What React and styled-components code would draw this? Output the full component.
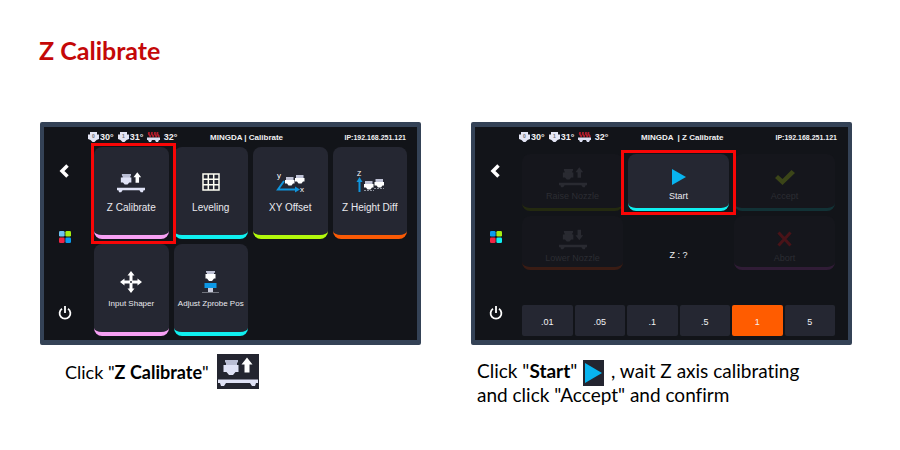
import React from "react";
import styled, { createGlobalStyle, css } from "styled-components";

const GlobalStyle = createGlobalStyle`
  * { box-sizing: border-box; }
  body { margin: 0; background: #fff; color: #000; font-family: Lato, "Open Sans", sans-serif; font-variant-ligatures: none; }
`;

const Page = styled.main`
  padding: 35px 48px 32px 39px;
`;

const Heading = styled.h1`
  margin: 0 0 57px;
  font-size: 25px;
  line-height: 30px;
  font-weight: 700;
  color: #c40808;
`;

const Steps = styled.div`
  display: grid;
  grid-template-columns: 1fr 1fr;
  gap: 50px;
  align-items: start;
  padding-left: 1px;
`;

const Step = styled.section`
  min-width: 0;
`;

const Panel = styled.div`
  border: solid #344256;
  border-width: 5px 4px;
  border-radius: 2px;
  background: #121419;
  color: #f0f0f2;
  font-family: "Liberation Sans", Arial, sans-serif;
  padding-bottom: 4px;
`;

const TopBar = styled.header`
  display: grid;
  grid-template-columns: 100px 1fr auto;
  align-items: center;
  height: 20px;
  padding: 0 11px 0 44px;
  font-weight: 700;
`;

const Temps = styled.div`
  display: flex;
  gap: 4px;
`;

const Temp = styled.span`
  display: flex;
  align-items: center;
  gap: 1px;
  font-size: 9px;
  line-height: 12px;
`;

const ScreenTitle = styled.span`
  font-size: 8px;
  white-space: pre;
  padding-left: 22px;
`;

const Address = styled.span`
  font-size: 7px;
`;

const Body = styled.div`
  display: flex;
  gap: ${(p) => (p.$wide ? 6 : 9)}px;
  padding-right: ${(p) => (p.$wide ? 13 : 10)}px;
`;

const SideBar = styled.nav`
  width: 41px;
  flex: none;
  display: flex;
  flex-direction: column;
  align-items: center;
  padding: 16px 0;
`;

const SideButton = styled.button`
  display: block;
  border: 0;
  padding: 0;
  background: none;
  line-height: 0;
  cursor: pointer;
  & + & { margin-top: 52px; }
  &:last-child { margin-top: auto; }
`;

const MenuGrid = styled.div`
  flex: 1;
  display: grid;
  grid-template-columns: repeat(4, 1fr);
  grid-auto-rows: 92px;
  gap: 5px;
`;

const Controls = styled.div`
  flex: 1;
  padding-top: 7px;
`;

const ControlGrid = styled.div`
  display: grid;
  grid-template-columns: repeat(3, 1fr);
  grid-template-rows: 57px 54px;
  gap: 5px;
`;

const Tile = styled.button`
  position: relative;
  min-width: 0;
  display: flex;
  flex-direction: column;
  align-items: center;
  border: 0 solid ${(p) => p.$accent};
  border-bottom-width: 4px;
  border-radius: 8px;
  background: #252732;
  color: #e9e9ee;
  font: 10px/14px "Liberation Sans", Arial, sans-serif;
  padding: 20px 0 0;
  gap: 4px;
  white-space: nowrap;
  cursor: pointer;
  ${(p) => p.$small && css`
    font-size: 8px;
    padding-top: 23px;
    gap: 0;
  `}
  ${(p) => p.$short && css`
    padding-top: 12px;
    gap: 1px;
    border-bottom-width: 3px;
    font-size: 9px;
  `}
  &:disabled {
    background: #15161c;
    color: #2c2d33;
    cursor: default;
  }
`;

const TileIcon = styled.span`
  display: flex;
  align-items: center;
  justify-content: center;
  height: ${(p) => (p.$short ? 22 : 30)}px;
`;

const Highlight = styled.span`
  position: absolute;
  inset: ${(p) => (p.$short ? "-4px -7px -7px" : "-4px -7px -9px -3px")};
  border: 3px solid #f90606;
  pointer-events: none;
  z-index: 1;
`;

const Reading = styled.output`
  align-self: end;
  text-align: center;
  padding-bottom: 8px;
  font-size: 9px;
  line-height: 14px;
`;

const StepSizes = styled.div`
  display: grid;
  grid-template-columns: repeat(6, 1fr);
  gap: 2px;
  margin-top: 35px;
`;

const SizeButton = styled.button`
  height: 31px;
  border: 0;
  border-radius: 2px;
  padding: 2px 0 0;
  background: ${(p) => (p.$active ? "#ff5c00" : "#252732")};
  color: #f2f2f4;
  font: 9px/14px "Liberation Sans", Arial, sans-serif;
  cursor: pointer;
`;

const Caption = styled.p`
  margin: 14px 0 0;
  padding-left: 6px;
  font-size: 19px;
  line-height: 24px;
`;

const IconCaption = styled.p`
  display: flex;
  align-items: center;
  gap: 8px;
  margin: 9px 0 0;
  padding-left: 25px;
  font-size: 18px;
  line-height: 24px;
`;

const InlineIcon = styled.span`
  display: inline-flex;
  align-items: center;
  justify-content: center;
  vertical-align: middle;
  background: #232530;
  margin: ${(p) => (p.$large ? "0" : "-4px 2px -4px 1px")};
  width: ${(p) => (p.$large ? 42 : 21)}px;
  height: ${(p) => (p.$large ? 35 : 26)}px;
`;

const NozzleBed = ({ width = 28, height = 21, down = false, dim = false }) => {
  const top = dim ? "#292a31" : "#b9bdd4";
  const body = dim ? "#292a31" : "#dfe2f6";
  return (
    <svg width={width} height={height} viewBox="1 2 40 30" aria-hidden="true">
      <path d="M8 5h13v2l-1 1v2.500H9V8L8 7z" fill={top} />
      <path d="M6.500 10h15v7h-3L16 20h-4l-2.500-3h-3z" fill={body} />
      <path
        d={down ? "M27.500 3h5v8h3l-5.500 7-5.500-7h3z" : "M30 2.500l5.500 7h-3v8h-5v-8h-3z"}
        fill={dim ? "#292a31" : "#fff"}
      />
      <path d="M1 24.500h40V28h-2l-1 3h-3l-2-3H9l-2 3H4l-1-3H1z" fill={body} />
    </svg>
  );
};

const MiniNozzle = ({ x, y }) => (
  <g transform={`translate(${x} ${y})`}>
    <path d="M1 0h7.500v3H1z" fill="#bfc2d6" />
    <path d="M0 3h9.500v3.500H8L6.500 8.500h-3L2 6.500H0z" fill="#fff" />
  </g>
);

const GridIcon = () => (
  <svg width="18" height="18" viewBox="0 0 18 18" fill="none" stroke="#fffff4" strokeWidth="1.500" aria-hidden="true">
    <path d="M1 1h16v16H1zM6.300 1v16M11.700 1v16M1 6.300h16M1 11.700h16" />
  </svg>
);

const OffsetIcon = () => (
  <svg width="29" height="22" viewBox="0 0 29 22" aria-hidden="true">
    <path d="M8 10l-6 8.500H21" fill="none" stroke="#1195dc" strokeWidth="2" />
    <path d="M19 15.500l5 3-5 3z" fill="#1195dc" />
    <text x="1" y="7" fontSize="8" fill="#fff">y</text>
    <text x="24" y="21" fontSize="8" fill="#fff">x</text>
    <MiniNozzle x={9} y={6} />
    <MiniNozzle x={19} y={4} />
  </svg>
);

const HeightIcon = () => (
  <svg width="28" height="24" viewBox="0 0 28 24" aria-hidden="true">
    <text x="1" y="6" fontSize="7" fill="#fff">Z</text>
    <path d="M3.500 22V10" stroke="#1195dc" strokeWidth="2" />
    <path d="M0.500 12l3-5 3 5z" fill="#1195dc" />
    <MiniNozzle x={8} y={11} />
    <MiniNozzle x={18.500} y={9} />
    <path d="M8 20.500h10M18 18.500h10" stroke="#aaadb9" strokeDasharray="2 1" strokeWidth=".8" />
  </svg>
);

const MoveIcon = () => (
  <svg width="22" height="22" viewBox="0 0 22 22" aria-hidden="true">
    <path
      d="M11 0l3.500 4.500h-2v5h5v-2L22 11l-4.500 3.500v-2h-5v5h2L11 22l-3.500-4.500h2v-5h-5v2L0 11l4.500-3.500v2h5v-5h-2z"
      fill="#fff"
    />
    <circle cx="11" cy="11" r="1" fill="#252732" />
  </svg>
);

const ProbeIcon = () => (
  <svg width="17" height="23" viewBox="0 0 17 23" aria-hidden="true">
    <path d="M4 0h9v1.500l-1 .5v1H5V2l-1-.5z" fill="#bfc2d6" />
    <path d="M3.500 3h10v4.500H12L10 10H7L5 7.500H3.500z" fill="#fff" />
    <path d="M2.500 12h12v5h-12z" fill="#0d98e6" />
    <path d="M6 17h5v4H6z" fill="#c8cbdc" />
    <path d="M0 21.500h17" stroke="#70737d" />
  </svg>
);

const PlayIcon = ({ width = 14, height = 16 }) => (
  <svg width={width} height={height} viewBox="0 0 14 16" preserveAspectRatio="none" aria-hidden="true">
    <path d="M0 0l14 8-14 8z" fill="#08b4ef" />
  </svg>
);

const CheckIcon = () => (
  <svg width="20" height="15" viewBox="0 0 20 15" aria-hidden="true">
    <path d="M0 8l3-3 4.500 4L16.500 0 20 3 7.500 15z" fill="#3b4518" />
  </svg>
);

const CrossIcon = () => (
  <svg width="15" height="16" viewBox="0 0 15 16" fill="none" stroke="#491318" strokeWidth="3" aria-hidden="true">
    <path d="M1.500 1.500l12 13M13.500 1.500l-12 13" />
  </svg>
);

const BackIcon = () => (
  <svg width="11" height="16" viewBox="0 0 11 16" fill="none" stroke="#fff" strokeWidth="3.500" aria-hidden="true">
    <path d="M8.500 2.500L3 8l5.500 5.500" />
  </svg>
);

const AppsIcon = ({ colors }) => (
  <svg width="12" height="12" viewBox="0 0 12 12" aria-hidden="true">
    {colors.map((c, i) => (
      <rect key={i} x={(i % 2) * 6.4} y={i > 1 ? 6.4 : 0} width="5.600" height="5.600" rx="1.300" fill={c} />
    ))}
  </svg>
);

const PowerIcon = () => (
  <svg width="14" height="14" viewBox="0 0 14 14" fill="none" stroke="#fff" strokeWidth="1.800" aria-hidden="true">
    <path d="M4 2.800a5.400 5.400 0 1 0 6 0M7 0v7" />
  </svg>
);

const ExtruderIcon = ({ index }) => (
  <svg width="11" height="10" viewBox="0 0 11 10" aria-hidden="true">
    <path d="M2 0h7v2.500h2V7L8.500 8 6.500 10h-2l-2-2L0 7V2.500h2z" fill="#e4e6f5" />
    <text x="5.500" y="6" fontSize="5" textAnchor="middle" fill="#6c6e78">{index}</text>
  </svg>
);

const BedIcon = () => (
  <svg width="13" height="10" viewBox="0 0 13 10" aria-hidden="true">
    <path d="M2.500 0q-1.500 1.500 0 3t0 2M5.500 0Q4 1.500 5.500 3t0 2M8.500 0Q7 1.500 8.500 3t0 2M11 0Q9.500 1.500 11 3t0 2" fill="none" stroke="#b01c2b" strokeWidth="1.800" />
    <path d="M0 5.500h13V8h-1l-1 2H9L8 8H5l-1 2H2L1 8H0z" fill="#dcdff2" />
  </svg>
);

function StatusBar({ title }) {
  return (
    <TopBar>
      <Temps>
        <Temp><ExtruderIcon index="0" />30°</Temp>
        <Temp><ExtruderIcon index="1" />31°</Temp>
        <Temp><BedIcon />&nbsp;32°</Temp>
      </Temps>
      <ScreenTitle>{title}</ScreenTitle>
      <Address>IP:192.168.251.121</Address>
    </TopBar>
  );
}

function Navigation({ colors }) {
  return (
    <SideBar aria-label="Printer">
      <SideButton aria-label="Back"><BackIcon /></SideButton>
      <SideButton aria-label="Home"><AppsIcon colors={colors} /></SideButton>
      <SideButton aria-label="Power"><PowerIcon /></SideButton>
    </SideBar>
  );
}

function Action({ icon, label, accent, small, short, disabled, highlighted }) {
  return (
    <Tile $accent={accent} $small={small} $short={short} disabled={disabled}>
      <TileIcon $short={short}>{icon}</TileIcon>
      <span>{label}</span>
      {highlighted && <Highlight $short={short} />}
    </Tile>
  );
}

const sizes = [".01", ".05", ".1", ".5", "1", "5"];

export default function App() {
  return (
    <>
      <GlobalStyle />
      <Page>
        <Heading>Z Calibrate</Heading>
        <Steps>
          <Step>
            <Panel>
              <StatusBar title="MINGDA | Calibrate" />
              <Body>
                <Navigation colors={["#6fc3f0", "#a6ee10", "#f22443", "#0b9bee"]} />
                <MenuGrid>
                  <Action icon={<NozzleBed />} label="Z Calibrate" accent="#f7a0f4" highlighted />
                  <Action icon={<GridIcon />} label="Leveling" accent="#0ff0f0" />
                  <Action icon={<OffsetIcon />} label="XY Offset" accent="#b2f90c" />
                  <Action icon={<HeightIcon />} label="Z Height Diff" accent="#fa5a05" />
                  <Action icon={<MoveIcon />} label="Input Shaper" accent="#f7a0f4" small />
                  <Action icon={<ProbeIcon />} label="Adjust Zprobe Pos" accent="#0ff0f0" small />
                </MenuGrid>
              </Body>
            </Panel>
            <IconCaption>
              <span>Click "<b>Z Calibrate</b>"</span>
              <InlineIcon $large><NozzleBed width={40} height={30} /></InlineIcon>
            </IconCaption>
          </Step>
          <Step>
            <Panel>
              <StatusBar title="MINGDA  | Z Calibrate" />
              <Body $wide>
                <Navigation colors={["#0b9bee", "#a6ee10", "#f22443", "#10eef0"]} />
                <Controls>
                  <ControlGrid>
                    <Action icon={<NozzleBed dim />} label="Raise Nozzle" accent="#242a10" short disabled />
                    <Action icon={<PlayIcon />} label="Start" accent="#0ff0f0" short highlighted />
                    <Action icon={<CheckIcon />} label="Accept" accent="#123236" short disabled />
                    <Action icon={<NozzleBed dim down />} label="Lower Nozzle" accent="#3a1c14" short disabled />
                    <Reading>Z : ?</Reading>
                    <Action icon={<CrossIcon />} label="Abort" accent="#301c36" short disabled />
                  </ControlGrid>
                  <StepSizes>
                    {sizes.map((s) => (
                      <SizeButton key={s} $active={s === "1"} aria-pressed={s === "1"}>{s}</SizeButton>
                    ))}
                  </StepSizes>
                </Controls>
              </Body>
            </Panel>
            <Caption>
              Click "<b>Start</b>"{" "}
              <InlineIcon><PlayIcon width={17} height={20} /></InlineIcon>
              {" "}, wait Z axis calibrating
              <br />
              and click "Accept" and confirm
            </Caption>
          </Step>
        </Steps>
      </Page>
    </>
  );
}
